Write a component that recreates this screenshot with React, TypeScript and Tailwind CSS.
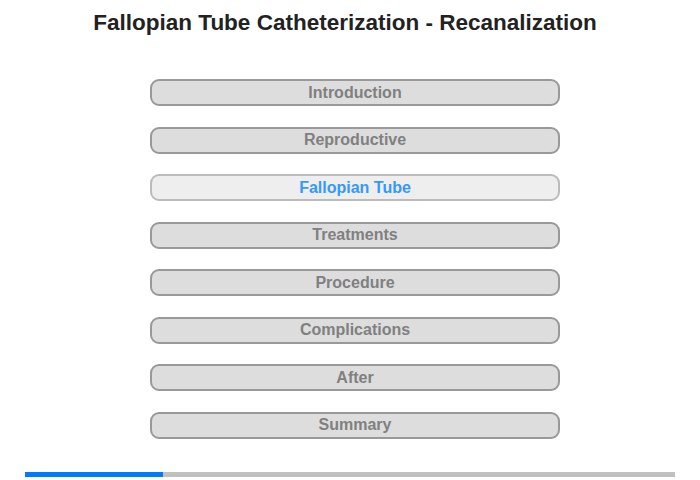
const items = [
  "Introduction",
  "Reproductive",
  "Fallopian Tube",
  "Treatments",
  "Procedure",
  "Complications",
  "After",
  "Summary",
];

const active = 2;

export default function App() {
  return (
    <div className="w-[700px] h-[480px] bg-white flex flex-col font-['Liberation_Sans',Arial,sans-serif]">
      <h1 className="pt-[9px] pr-[10px] text-center text-[22.5px] leading-[28px] font-bold text-[#222]">
        Fallopian Tube Catheterization - Recanalization
      </h1>

      <div className="mt-[42px] ml-[150px] flex flex-col gap-[20.5px]">
        {items.map((label, i) => (
          <div
            key={label}
            className={
              i === active
                ? "w-[410px] h-[27px] rounded-[9px] border-2 border-[#bbbbbb] bg-[#eeeeee] flex items-center justify-center text-[16px] font-bold text-[#3399ff]"
                : "w-[410px] h-[27px] rounded-[9px] border-2 border-[#999999] bg-[#dddddd] flex items-center justify-center text-[16px] font-bold text-[#808080]"
            }
          >
            {label}
          </div>
        ))}
      </div>

      <div className="mt-auto mb-[3px] mx-[25px] h-[5px] bg-[#c0c0c0] flex">
        <div className="h-full bg-[#007bff]" style={{ width: `${(138 / 650) * 100}%` }} />
      </div>
    </div>
  );
}
